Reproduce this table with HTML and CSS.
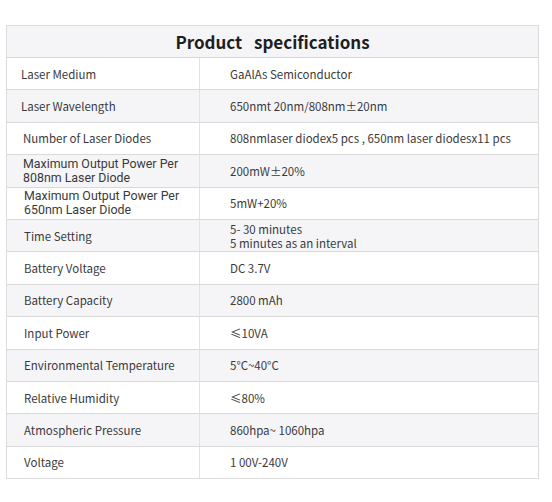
FILE: index.html
```html
<!DOCTYPE html>
<html lang="en">
<head>
<meta charset="utf-8">
<title>Product specifications</title>
<link rel="stylesheet" href="styles.css">
</head>
<body>
<div class="page">
  <div class="spec">
    <div class="title">Product&nbsp;&nbsp;specifications</div>
    <div class="row"><div class="k">Laser Medium</div><div class="v">GaAlAs Semiconductor</div></div>
    <div class="row alt"><div class="k">Laser Wavelength</div><div class="v">650nmt 20nm/808nm±20nm</div></div>
    <div class="row"><div class="k in">Number of Laser Diodes</div><div class="v">808nmlaser diodex5 pcs , 650nm laser diodesx11 pcs</div></div>
    <div class="row alt"><div class="k in alt-font">Maximum Output Power Per<br>808nm Laser Diode</div><div class="v">200mW±20%</div></div>
    <div class="row"><div class="k in2 alt-font">Maximum Output Power Per<br>650nm Laser Diode</div><div class="v">5mW+20%</div></div>
    <div class="row alt"><div class="k in2">Time Setting</div><div class="v two">5- 30 minutes<br>5 minutes as an interval</div></div>
    <div class="row"><div class="k in2">Battery Voltage</div><div class="v">DC 3.7V</div></div>
    <div class="row alt"><div class="k in2">Battery Capacity</div><div class="v">2800 mAh</div></div>
    <div class="row"><div class="k in2">Input Power</div><div class="v">≤10VA</div></div>
    <div class="row alt"><div class="k in2">Environmental Temperature</div><div class="v">5°C~40°C</div></div>
    <div class="row"><div class="k in2">Relative Humidity</div><div class="v">≤80%</div></div>
    <div class="row alt"><div class="k in2">Atmospheric Pressure</div><div class="v">860hpa~ 1060hpa</div></div>
    <div class="row last"><div class="k in2">Voltage</div><div class="v">1 00V-240V</div></div>
  </div>
</div>
</body>
</html>
```
FILE: styles.css
```css
html, body {
  margin: 0;
  padding: 0;
  background: #ffffff;
}
.page {
  padding: 25px 0 0 6px;
}
.spec {
  width: 531px;
  border: 1px solid #dcdcdc;
  font-family: "Noto Sans CJK SC", "Noto Sans", sans-serif;
  font-size: 11.5px;
  color: #3a3a3a;
}
.title {
  height: 31px;
  display: flex;
  align-items: center;
  justify-content: center;
  background: #f5f5f8;
  border-bottom: 1px solid #d6d6d6;
  font-size: 17px;
  font-weight: 700;
  color: #1e1e1e;
  word-spacing: 2px;
}
.row {
  display: grid;
  grid-template-columns: 193px 1fr;
  height: 31.4px;
  border-bottom: 1px solid #d9d9d9;
  background: #ffffff;
}
.row.alt {
  background: #f5f5f8;
}
.row.last {
  border-bottom: none;
}
.k, .v {
  display: flex;
  align-items: center;
  line-height: 14px;
}
.k {
  padding-left: 14px;
  border-right: 1px solid #e2e2e2;
}
.k.in { padding-left: 16px; }
.k.in2 { padding-left: 17px; }
.alt-font {
  font-family: Roboto, "Noto Sans", sans-serif;
  line-height: 14px;
  font-size: 12.4px;
}
.v {
  padding-left: 30px;
}
.v.two {
  line-height: 14px;
}
```
